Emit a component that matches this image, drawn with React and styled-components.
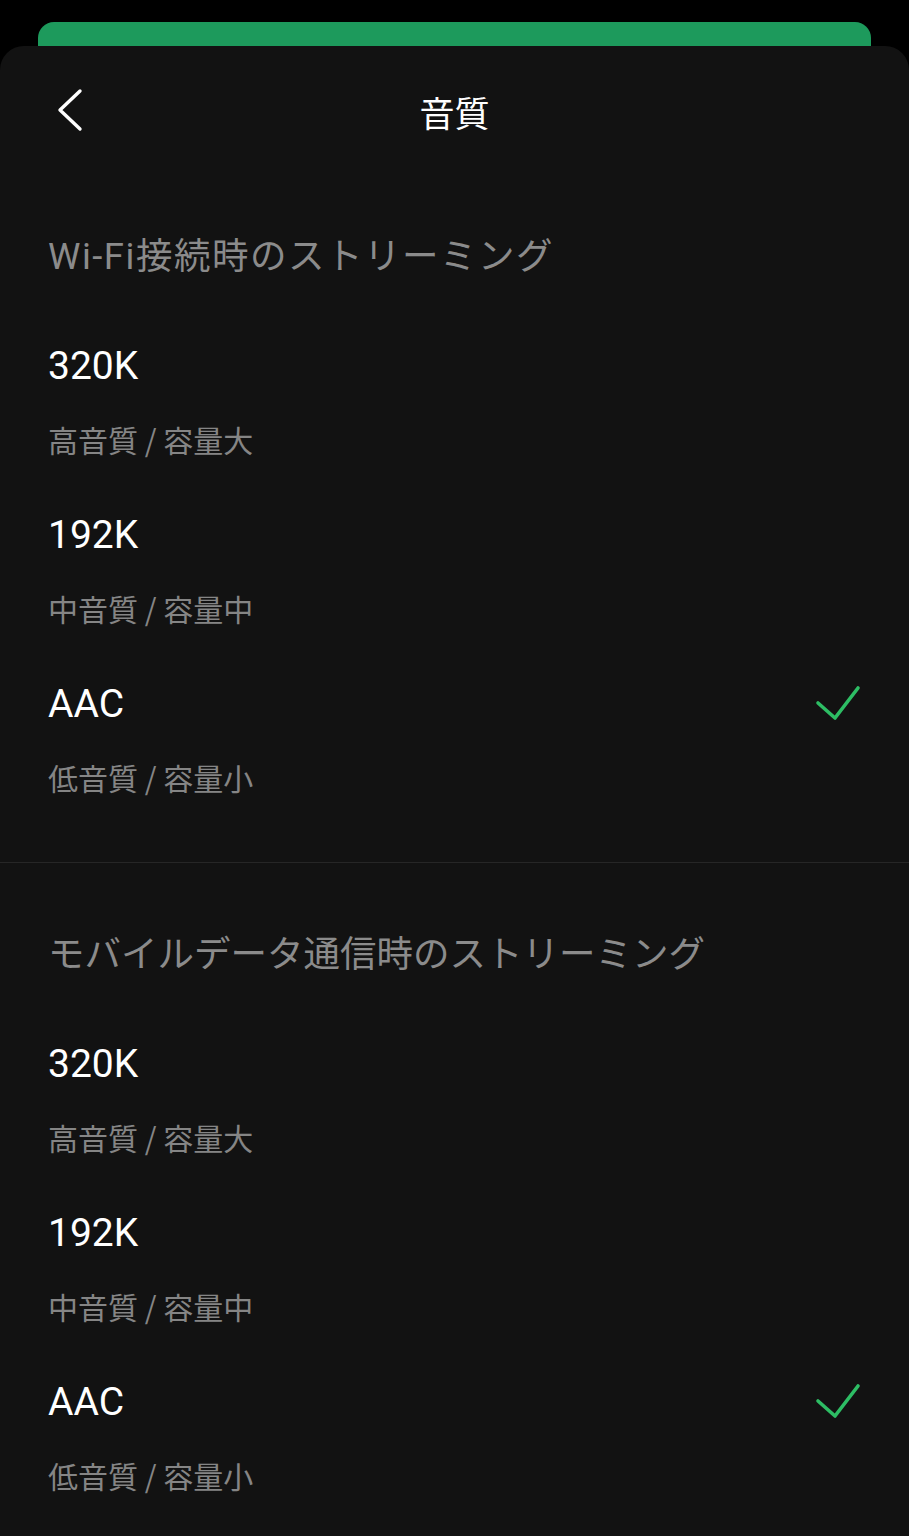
import React from 'react';
import styled, { createGlobalStyle } from 'styled-components';

const GlobalStyle = createGlobalStyle`
  html, body {
    margin: 0;
    padding: 0;
    background: #000;
  }
  body {
    font-family: Roboto, "Noto Sans CJK JP", sans-serif;
  }
`;

const Screen = styled.div`
  background: #000;
  min-height: 1536px;
  display: flex;
  flex-direction: column;
  overflow: hidden;
`;

const PeekBar = styled.div`
  background: #1d9a5c;
  height: 40px;
  margin: 22px 38px -16px;
  border-radius: 16px 16px 0 0;
`;

const Sheet = styled.div`
  position: relative;
  background: #121212;
  border-radius: 24px 24px 0 0;
  flex: 1;
  display: flex;
  flex-direction: column;
`;

const Header = styled.header`
  box-sizing: border-box;
  height: 119px;
  padding-top: 12px;
  display: flex;
  align-items: center;
  justify-content: center;
  position: relative;
`;

const BackButton = styled.button`
  position: absolute;
  left: 48px;
  top: 38px;
  width: 44px;
  height: 52px;
  background: none;
  border: 0;
  padding: 0;
  display: flex;
  align-items: center;
  justify-content: center;
`;

const Title = styled.h1`
  margin: 0;
  font-family: "Noto Sans CJK JP", sans-serif;
  font-size: 35px;
  font-weight: 400;
  color: #fff;
  line-height: 1;
`;

const Section = styled.section`
  padding: 62px 0 51px;
  border-bottom: ${(p) => (p.$divider ? '1px solid #262626' : 'none')};
`;

const SectionTitle = styled.h2`
  margin: 0 0 17px;
  padding: 0 48px;
  font-size: 36.5px;
  font-weight: 400;
  line-height: 60px;
  color: #8b8b8b;
  white-space: nowrap;
  letter-spacing: ${(p) => p.$spacing || 0};
`;

const Option = styled.div`
  padding: 37px 48px 14px 48px;
`;

const OptionRow = styled.div`
  display: flex;
  align-items: center;
  justify-content: space-between;
  height: 50px;
`;

const OptionLabel = styled.span`
  font-size: 39px;
  color: #fff;
  line-height: 50px;
`;

const OptionNote = styled.div`
  margin-top: 28px;
  font-family: "Noto Sans CJK JP", sans-serif;
  font-size: 30px;
  line-height: 40px;
  color: #858585;
  white-space: nowrap;
`;

const Check = () => (
  <svg width="46" height="38" viewBox="0 0 46 38" fill="none">
    <path
      d="M3 18 L20 33 L43 3"
      stroke="#2dbd64"
      strokeWidth="3.6"
      strokeLinecap="round"
      strokeLinejoin="round"
    />
  </svg>
);

const options = [
  { label: '320K', note: '高音質 / 容量大' },
  { label: '192K', note: '中音質 / 容量中' },
  { label: 'AAC', note: '低音質 / 容量小', selected: true },
];

const sections = [
  { title: 'Wi-Fi接続時のストリーミング', divider: true, spacing: '1.5px' },
  { title: 'モバイルデータ通信時のストリーミング' },
];

export default function App() {
  return (
    <>
      <GlobalStyle />
      <Screen>
        <PeekBar />
        <Sheet>
          <Header>
            <BackButton aria-label="戻る">
              <svg width="30" height="44" viewBox="0 0 30 44" fill="none">
                <path
                  d="M25 3 L5 22 L25 41"
                  stroke="#fff"
                  strokeWidth="3.4"
                  strokeLinecap="round"
                  strokeLinejoin="round"
                />
              </svg>
            </BackButton>
            <Title>音質</Title>
          </Header>
          {sections.map((s) => (
            <Section key={s.title} $divider={s.divider}>
              <SectionTitle $spacing={s.spacing}>{s.title}</SectionTitle>
              {options.map((o) => (
                <Option key={o.label}>
                  <OptionRow>
                    <OptionLabel>{o.label}</OptionLabel>
                    {o.selected && <Check />}
                  </OptionRow>
                  <OptionNote>{o.note}</OptionNote>
                </Option>
              ))}
            </Section>
          ))}
        </Sheet>
      </Screen>
    </>
  );
}
